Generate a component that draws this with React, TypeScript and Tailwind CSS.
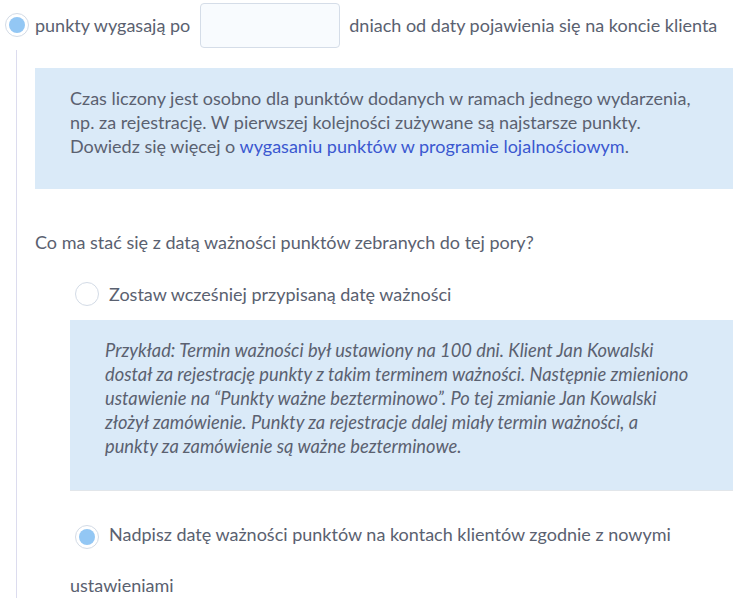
import React from 'react'

function Radio({ checked }: { checked?: boolean }) {
  return (
    <span className="inline-flex shrink-0 w-[24px] h-[24px] rounded-full border border-[#d3dbe6] bg-white items-center justify-center align-middle">
      {checked && <span className="w-[16px] h-[16px] rounded-full bg-[#93c7f4]" />}
    </span>
  )
}

export default function App() {
  return (
    <div className="w-[740px] h-[598px] overflow-hidden bg-white flex flex-col font-['Lato','Liberation_Sans',sans-serif] text-[18px] text-[#5a6170]">
      <div className="flex items-center h-[50px] pl-[5px] shrink-0">
        <Radio checked />
        <span className="ml-[6px]">punkty wygasają po</span>
        <input
          type="text"
          className="ml-[10px] mr-[9px] w-[140px] h-[45px] rounded-[4px] border border-[#d5dde8] bg-[#f8fbfe] outline-none"
        />
        <span>dniach od daty pojawienia się na koncie klienta</span>
      </div>

      <div className="flex-1 ml-[16px] border-l border-[#dcdcee] pl-[18px] pr-[7px]">
        <div className="mt-[18px] bg-[#daeaf8] pl-[35px] pr-[10px] pt-[18px] pb-[31px] leading-[24px]">
          Czas liczony jest osobno dla punktów dodanych w ramach jednego wydarzenia,
          <br />
          np. za rejestrację. W pierwszej kolejności zużywane są najstarsze punkty.
          <br />
          Dowiedz się więcej o{' '}
          <a href="#" className="text-[#3a58d0]">
            wygasaniu punktów w programie lojalnościowym
          </a>
          .
        </div>

        <p className="mt-[41px] leading-[24px]">Co ma stać się z datą ważności punktów zebranych do tej pory?</p>

        <div className="mt-[28px] flex items-center gap-[10px] pl-[40px] h-[24px]">
          <Radio />
          <span>Zostaw wcześniej przypisaną datę ważności</span>
        </div>

        <div className="ml-[35px] mt-[14px]">
          <div className="bg-[#daeaf8] border-b border-[#e2e6ea] pl-[35px] pr-[10px] pt-[18px] pb-[32px] leading-[24px] italic text-[18.3px]">
            Przykład: Termin ważności był ustawiony na 100 dni. Klient Jan Kowalski
            <br />
            dostał za rejestrację punkty z takim terminem ważności. Następnie zmieniono
            <br />
            ustawienie na “Punkty ważne bezterminowo”. Po tej zmianie Jan Kowalski
            <br />
            złożył zamówienie. Punkty za rejestracje dalej miały termin ważności, a
            <br />
            punkty za zamówienie są ważne bezterminowe.
          </div>

          <p className="mt-[18px] leading-[50px]">
            <span className="ml-[5px] mr-[10px] inline-block align-middle -mt-[3px]">
              <Radio checked />
            </span>
            Nadpisz datę ważności punktów na kontach klientów zgodnie z nowymi ustawieniami
          </p>
        </div>
      </div>
    </div>
  )
}
